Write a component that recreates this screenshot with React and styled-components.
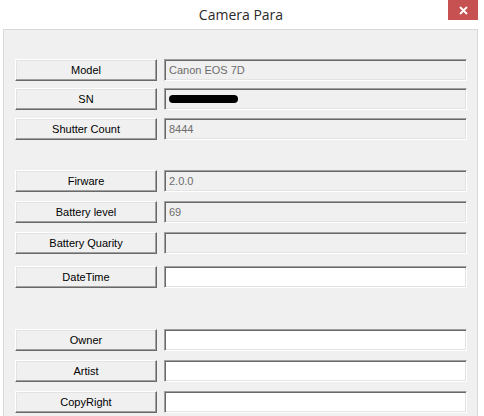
import styled, { createGlobalStyle } from "styled-components";

const GlobalStyle = createGlobalStyle`
  html, body {
    margin: 0;
    padding: 0;
    background: #ffffff;
  }
  body {
    width: 484px;
    height: 416px;
    overflow: hidden;
  }
`;

const Window = styled.div`
  width: 484px;
  height: 416px;
  background: #ffffff;
  display: flex;
  flex-direction: column;
  overflow: hidden;
`;

const TitleBar = styled.div`
  height: 29px;
  display: flex;
  align-items: flex-start;
  justify-content: center;
  position: relative;
`;

const Title = styled.div`
  font-family: "Open Sans", "Noto Sans", sans-serif;
  font-size: 14px;
  color: #2b2b2b;
  margin-top: 5px;
  margin-left: -2px;
`;

const CloseButton = styled.div`
  position: absolute;
  top: 0;
  right: 6px;
  width: 30px;
  height: 20px;
  background: #c75050;
  color: #ffffff;
  display: flex;
  align-items: center;
  justify-content: center;
`;

const Client = styled.div`
  flex: 1;
  margin: 0 6px 0 3px;
  border-top: 1px solid #d9d9d9;
  border-left: 1px solid #d9d9d9;
  border-right: 1px solid #d9d9d9;
  background: #f0f0f0;
  padding: 29px 10px 0 11px;
  display: flex;
  flex-direction: column;
`;

const Row = styled.div`
  display: grid;
  grid-template-columns: 142px 1fr;
  column-gap: 7px;
  height: 22px;
  margin-top: ${(props) => props.$space || 0}px;
`;

const FieldButton = styled.div`
  box-sizing: border-box;
  height: 22px;
  background: #f0f0f0;
  border: 1px solid;
  border-color: #ffffff #696969 #696969 #ffffff;
  box-shadow: inset -1px -1px #a0a0a0, inset 1px 1px #e3e3e3;
  font-family: "Liberation Sans", Arial, sans-serif;
  font-size: 11px;
  color: #000000;
  display: flex;
  align-items: center;
  justify-content: center;
  padding-bottom: 1px;
`;

const TextBox = styled.div`
  box-sizing: border-box;
  height: 22px;
  background: ${(props) => (props.$readOnly ? "#f0f0f0" : "#ffffff")};
  border: 1px solid;
  border-color: #a0a0a0 #ffffff #ffffff #a0a0a0;
  box-shadow: inset 1px 1px #696969, inset -1px -1px #e3e3e3;
  font-family: "Liberation Sans", Arial, sans-serif;
  font-size: 11px;
  color: #6d6d6d;
  display: flex;
  align-items: center;
  padding: 0 4px 1px;
`;

const Redaction = styled.span`
  display: block;
  width: 69px;
  height: 8px;
  border-radius: 4px;
  background: #000000;
  margin-top: 1px;
`;

const fields = [
  { label: "Model", value: "Canon EOS 7D", readOnly: true, space: 0 },
  { label: "SN", redacted: true, readOnly: true, space: 7 },
  { label: "Shutter Count", value: "8444", readOnly: true, space: 8 },
  { label: "Firware", value: "2.0.0", readOnly: true, space: 30 },
  { label: "Battery level", value: "69", readOnly: true, space: 9 },
  { label: "Battery Quarity", value: "", readOnly: true, space: 9 },
  { label: "DateTime", value: "", space: 12 },
  { label: "Owner", value: "", space: 41 },
  { label: "Artist", value: "", space: 9 },
  { label: "CopyRight", value: "", space: 9 },
];

export default function App() {
  return (
    <>
      <GlobalStyle />
      <Window>
        <TitleBar>
          <Title>Camera Para</Title>
          <CloseButton>
            <svg width="9" height="9" viewBox="0 0 9 9">
              <path d="M1 1 L8 8 M8 1 L1 8" stroke="#ffffff" strokeWidth="1.8" />
            </svg>
          </CloseButton>
        </TitleBar>
        <Client>
          {fields.map((f) => (
            <Row key={f.label} $space={f.space}>
              <FieldButton>{f.label}</FieldButton>
              <TextBox $readOnly={f.readOnly}>
                {f.redacted ? <Redaction /> : f.value}
              </TextBox>
            </Row>
          ))}
        </Client>
      </Window>
    </>
  );
}
